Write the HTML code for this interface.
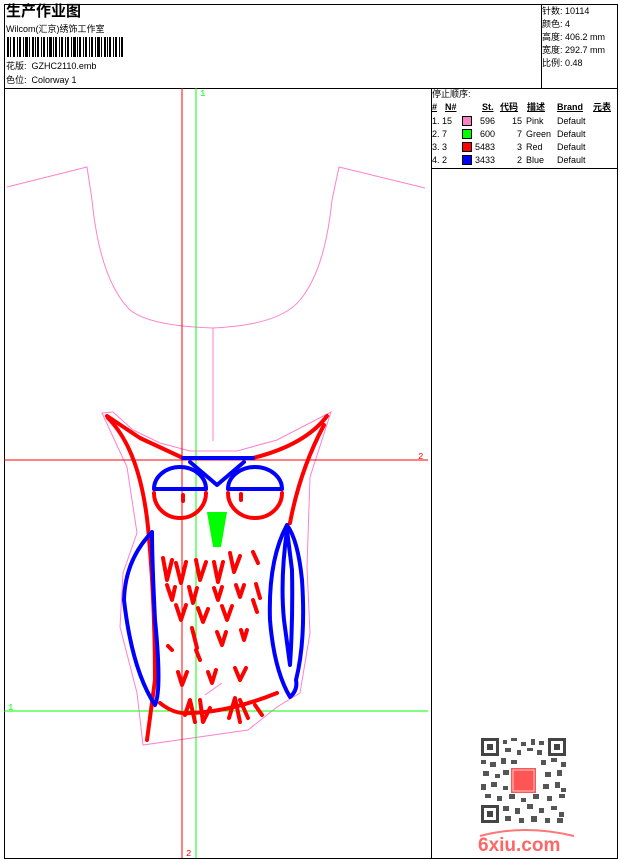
<!DOCTYPE html>
<html><head><meta charset="utf-8"><style>
*{margin:0;padding:0}
body{width:620px;height:860px;background:#fff;position:relative;overflow:hidden;font-family:"Liberation Sans","Noto Sans CJK SC",sans-serif;font-size:9px;color:#000}
.a{position:absolute;white-space:nowrap;line-height:11px}
.l{position:absolute;background:#000}
.sw{position:absolute;width:8px;height:8px;border:1px solid #000}
.u{text-decoration:underline;font-weight:bold}
</style></head><body>
<div class="l" style="left:4px;top:4px;width:614px;height:1px"></div>
<div class="l" style="left:4px;top:858px;width:614px;height:1px"></div>
<div class="l" style="left:4px;top:4px;width:1px;height:855px"></div>
<div class="l" style="left:617px;top:4px;width:1px;height:855px"></div>
<div class="l" style="left:4px;top:88px;width:614px;height:1px"></div>
<div class="l" style="left:541px;top:4px;width:1px;height:84px"></div>
<div class="l" style="left:431px;top:88px;width:1px;height:771px"></div>
<div class="l" style="left:431px;top:168px;width:187px;height:1px"></div>

<div class="a" style="left:6px;top:3px;font-size:15px;line-height:18px;font-weight:bold">生产作业图</div>
<div class="a" style="left:6px;top:24px">Wilcom(汇京)绣饰工作室</div>
<svg style="position:absolute;left:7px;top:37px" width="120" height="20">
<g fill="#000">
<rect x="0" y="0" width="2" height="20"/><rect x="3" y="0" width="1" height="20"/><rect x="6" y="0" width="2" height="20"/><rect x="10" y="0" width="1" height="20"/><rect x="12" y="0" width="2" height="20"/><rect x="16" y="0" width="1" height="20"/><rect x="18" y="0" width="3" height="20"/><rect x="22" y="0" width="1" height="20"/><rect x="25" y="0" width="2" height="20"/><rect x="28" y="0" width="1" height="20"/><rect x="30" y="0" width="2" height="20"/><rect x="34" y="0" width="1" height="20"/><rect x="36" y="0" width="2" height="20"/><rect x="40" y="0" width="1" height="20"/><rect x="42" y="0" width="3" height="20"/><rect x="46" y="0" width="1" height="20"/><rect x="48" y="0" width="2" height="20"/><rect x="52" y="0" width="1" height="20"/><rect x="54" y="0" width="2" height="20"/><rect x="58" y="0" width="1" height="20"/><rect x="60" y="0" width="2" height="20"/><rect x="64" y="0" width="1" height="20"/><rect x="66" y="0" width="3" height="20"/><rect x="70" y="0" width="1" height="20"/><rect x="72" y="0" width="2" height="20"/><rect x="76" y="0" width="1" height="20"/><rect x="78" y="0" width="2" height="20"/><rect x="82" y="0" width="1" height="20"/><rect x="84" y="0" width="2" height="20"/><rect x="88" y="0" width="1" height="20"/><rect x="90" y="0" width="3" height="20"/><rect x="94" y="0" width="1" height="20"/><rect x="97" y="0" width="2" height="20"/><rect x="100" y="0" width="1" height="20"/><rect x="102" y="0" width="2" height="20"/><rect x="106" y="0" width="1" height="20"/><rect x="108" y="0" width="2" height="20"/><rect x="112" y="0" width="1" height="20"/><rect x="114" y="0" width="2" height="20"/>
</g></svg>
<div class="a" style="left:6px;top:61px">花版:&nbsp; GZHC2110.emb</div>
<div class="a" style="left:6px;top:75px">色位:&nbsp; Colorway 1</div>

<div class="a" style="left:542px;top:6px">针数: 10114</div>
<div class="a" style="left:542px;top:19px">颜色: 4</div>
<div class="a" style="left:542px;top:32px">高度: 406.2 mm</div>
<div class="a" style="left:542px;top:45px">宽度: 292.7 mm</div>
<div class="a" style="left:542px;top:58px">比例: 0.48</div>

<div class="a" style="left:432px;top:89px">停止顺序:</div>
<div class="a u" style="left:432px;top:102px">#</div>
<div class="a u" style="left:445px;top:102px">N#</div>
<div class="a u" style="left:482px;top:102px">St.</div>
<div class="a u" style="left:500px;top:102px">代码</div>
<div class="a u" style="left:527px;top:102px">描述</div>
<div class="a u" style="left:557px;top:102px">Brand</div>
<div class="a u" style="left:593px;top:102px">元表</div>

<div class="a" style="left:432px;top:116px">1. 15</div><div class="sw" style="left:462px;top:116px;background:#ff80c0"></div><div class="a" style="left:473px;top:116px;width:22px;text-align:right">596</div><div class="a" style="left:500px;top:116px;width:22px;text-align:right">15</div><div class="a" style="left:526px;top:116px">Pink</div><div class="a" style="left:557px;top:116px">Default</div>
<div class="a" style="left:432px;top:129px">2. 7</div><div class="sw" style="left:462px;top:129px;background:#00ff00"></div><div class="a" style="left:473px;top:129px;width:22px;text-align:right">600</div><div class="a" style="left:500px;top:129px;width:22px;text-align:right">7</div><div class="a" style="left:526px;top:129px">Green</div><div class="a" style="left:557px;top:129px">Default</div>
<div class="a" style="left:432px;top:142px">3. 3</div><div class="sw" style="left:462px;top:142px;background:#ff0000"></div><div class="a" style="left:473px;top:142px;width:22px;text-align:right">5483</div><div class="a" style="left:500px;top:142px;width:22px;text-align:right">3</div><div class="a" style="left:526px;top:142px">Red</div><div class="a" style="left:557px;top:142px">Default</div>
<div class="a" style="left:432px;top:155px">4. 2</div><div class="sw" style="left:462px;top:155px;background:#0000ff"></div><div class="a" style="left:473px;top:155px;width:22px;text-align:right">3433</div><div class="a" style="left:500px;top:155px;width:22px;text-align:right">2</div><div class="a" style="left:526px;top:155px">Blue</div><div class="a" style="left:557px;top:155px">Default</div>

<svg style="position:absolute;left:0;top:0" width="620" height="860">
<g fill="none" stroke="#ff80d0" stroke-width="1">
<path d="M7 187 L87 167 L92 200 Q100 280 130 310 Q150 326 213 328 Q280 325 300 300 Q325 270 332 200 L339 167 L425 188"/>
<path d="M213 328 V441"/>
<path d="M102 413 L113 412 L133 430 L160 443 L190 451 L237 451 L277 440 L331 412 L310 477 L307 567 L310 633 L300 693 L277 707 L248 730 L143 745 L137 693 L120 627 L123 573 L137 533 L127 467 Z"/>
<path d="M222 683 L205 695"/>
</g>
<line x1="182" y1="88" x2="182" y2="858" stroke="#f00"/>
<line x1="196" y1="88" x2="196" y2="858" stroke="#0f0"/>
<line x1="4" y1="460" x2="428" y2="460" stroke="#f00"/>
<line x1="4" y1="711" x2="428" y2="711" stroke="#0f0"/>
<g font-family="Liberation Mono,monospace" font-size="9">
<text x="200" y="96" fill="#0f0">1</text>
<text x="418" y="459" fill="#f00">2</text>
<text x="8" y="710" fill="#0f0">1</text>
<text x="186" y="856" fill="#f00">2</text>
</g>
<g fill="none" stroke="#f00" stroke-width="4" stroke-linecap="round" stroke-linejoin="round">
<path d="M107 416 L140 438 L183 458"/>
<path d="M327 416 Q305 445 253 458"/>
<path d="M108 418 Q140 450 148 527 Q155 600 155 680 L147 740"/>
<path d="M324 425 Q300 470 290 523"/>
<path d="M160 703 Q175 715 190 713 Q230 712 277 693"/>
<path d="M154 493 A26 25 0 0 0 206 493"/>
<path d="M228 493 A27 25 0 0 0 282 493"/>
<path d="M183 495 V501 M241 494 V500"/>
<path d="M163 558 L167 580 L172 560 M176 563 L181 583 L186 562 M196 560 L200 580 L206 562 M214 562 L218 582 L223 562 M230 553 L234 572 L240 556 M253 552 L258 563"/>
<path d="M167 585 L172 600 L175 587 M189 587 L193 603 L197 588 M214 588 L218 600 L222 587 M236 585 L240 597 L244 585 M256 584 L260 598"/>
<path d="M176 605 L181 620 L186 605 M198 608 L203 622 L208 609 M222 606 L227 620 L232 606 M253 600 L257 612"/>
<path d="M192 628 L197 648 M217 632 L222 645 L226 632 M241 630 L244 640 L247 630 M168 646 L172 650 M196 650 L200 660"/>
<path d="M178 672 L182 685 L187 672 M208 672 L212 683 L216 670 M235 668 L240 680 L246 668"/>
<path d="M185 715 L190 700 L195 722 M200 700 L203 722 L210 708 M229 718 L235 698 L240 722 M240 700 L248 718 M255 705 L262 715"/>
</g>
<g fill="none" stroke="#00f" stroke-width="4" stroke-linecap="round" stroke-linejoin="round">
<path d="M183 458 L253 458"/>
<path d="M190 462 L217 485 L244 462"/>
<path d="M154 489 A26 22 0 0 1 206 489 Z"/>
<path d="M228 489 A27 22 0 0 1 282 489 Z"/>
<path d="M152 532 Q125 560 124 600 Q132 670 155 705 Q162 690 155 620 Q152 560 152 532 Z"/>
<path d="M287 525 Q268 560 270 620 Q274 670 290 697 Q298 690 296 680 Q306 640 302 580 Q298 540 287 525 Z"/>
<path d="M287 530 Q280 580 284 620 Q288 650 290 665 Q293 620 292 570 Z"/>
</g>
<polygon points="207,512 227,512 221,547 213,547" fill="#0f0"/>
</svg>

<svg style="position:absolute;left:481px;top:738px" width="85" height="85">
<g fill="#444">
<rect x="0" y="0" width="18" height="18"/><rect x="67" y="0" width="18" height="18"/><rect x="0" y="67" width="18" height="18"/>
</g>
<g fill="#fff"><rect x="3" y="3" width="12" height="12"/><rect x="70" y="3" width="12" height="12"/><rect x="3" y="70" width="12" height="12"/></g>
<g fill="#444"><rect x="6" y="6" width="6" height="6"/><rect x="73" y="6" width="6" height="6"/><rect x="6" y="73" width="6" height="6"/></g>
<g fill="#555">
<rect x="22" y="2" width="4" height="4"/><rect x="30" y="0" width="6" height="3"/><rect x="40" y="4" width="5" height="4"/><rect x="50" y="1" width="4" height="6"/><rect x="58" y="3" width="5" height="4"/>
<rect x="24" y="10" width="6" height="4"/><rect x="36" y="12" width="4" height="5"/><rect x="46" y="10" width="6" height="3"/><rect x="56" y="12" width="5" height="5"/>
<rect x="0" y="22" width="5" height="4"/><rect x="9" y="24" width="6" height="5"/><rect x="20" y="20" width="5" height="6"/><rect x="30" y="22" width="6" height="4"/><rect x="60" y="22" width="5" height="5"/><rect x="70" y="20" width="6" height="4"/><rect x="80" y="24" width="5" height="5"/>
<rect x="2" y="33" width="6" height="5"/><rect x="14" y="36" width="5" height="4"/><rect x="22" y="32" width="6" height="5"/><rect x="64" y="34" width="6" height="5"/><rect x="76" y="32" width="5" height="6"/>
<rect x="0" y="46" width="5" height="6"/><rect x="10" y="44" width="6" height="5"/><rect x="22" y="48" width="5" height="4"/><rect x="62" y="46" width="6" height="5"/><rect x="74" y="44" width="5" height="6"/><rect x="80" y="50" width="5" height="4"/>
<rect x="4" y="56" width="6" height="4"/><rect x="16" y="58" width="5" height="5"/><rect x="28" y="56" width="6" height="5"/><rect x="40" y="60" width="5" height="4"/><rect x="52" y="56" width="6" height="5"/><rect x="66" y="58" width="5" height="5"/><rect x="78" y="56" width="6" height="4"/>
<rect x="22" y="68" width="6" height="5"/><rect x="34" y="70" width="5" height="6"/><rect x="46" y="66" width="6" height="5"/><rect x="58" y="70" width="5" height="5"/><rect x="70" y="68" width="6" height="4"/><rect x="78" y="74" width="5" height="5"/>
<rect x="24" y="78" width="6" height="5"/><rect x="38" y="80" width="5" height="5"/><rect x="50" y="78" width="6" height="6"/><rect x="64" y="80" width="5" height="5"/><rect x="76" y="80" width="6" height="5"/>
</g>
<rect x="30" y="30" width="25" height="25" fill="#f55"/>
<rect x="32" y="32" width="21" height="21" fill="none" stroke="#fcc" stroke-width="1"/>
</svg>
<svg style="position:absolute;left:474px;top:826px" width="110" height="30">
<path d="M6 10 Q50 -2 100 10" fill="none" stroke="#f77" stroke-width="2"/>
<text x="4" y="25" font-family="Liberation Sans,sans-serif" font-weight="bold" font-size="19" fill="#f66">6xiu.com</text>
</svg>
</body></html>
